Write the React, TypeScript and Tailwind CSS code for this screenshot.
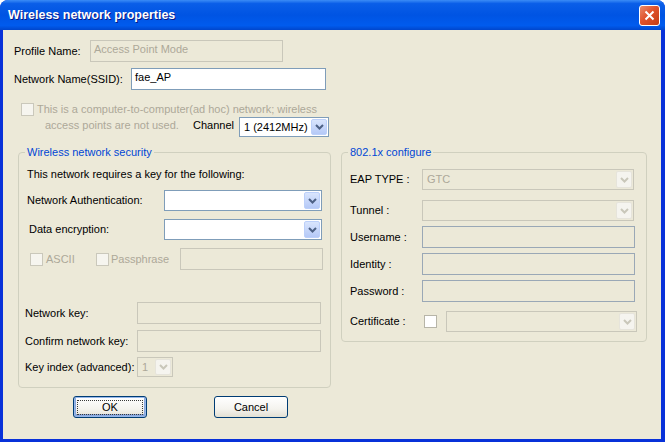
import React from 'react';

function Chevron({ disabled }: { disabled?: boolean }) {
  return (
    <svg width="9" height="6" viewBox="0 0 9 6">
      <path
        d="M1 1l3.5 3.5L8 1"
        stroke={disabled ? '#c9c7ba' : '#4d6185'}
        strokeWidth="2"
        fill="none"
      />
    </svg>
  );
}

function Combo({
  size,
  value,
  disabled = false,
}: {
  size: string;
  value?: string;
  disabled?: boolean;
}) {
  return (
    <div
      className={`${size} flex items-stretch border p-[1px] ${
        disabled ? 'border-[#c9c7ba] bg-[#ece9d8]' : 'border-[#7f9db9] bg-white'
      }`}
    >
      <div
        className={`flex-1 flex items-center pl-[3px] ${
          disabled ? 'text-[#aca899]' : 'text-black'
        }`}
      >
        {value}
      </div>
      <div
        className={`w-[16px] flex items-center justify-center rounded-[2px] border ${
          disabled
            ? 'border-[#e6e4db] bg-[#f5f4ef]'
            : 'border-[#bcd0fa] bg-[linear-gradient(180deg,#d9e5fd,#b5c9f7)]'
        }`}
      >
        <Chevron disabled={disabled} />
      </div>
    </div>
  );
}

function TextBox({
  size,
  value,
  tone = 'enabled',
}: {
  size: string;
  value?: string;
  tone?: 'enabled' | 'disabled' | 'readonly';
}) {
  const cls =
    tone === 'enabled'
      ? 'border-[#7f9db9] bg-white text-black'
      : tone === 'readonly'
        ? 'border-[#9aa8b6] bg-[#ece9d8] text-black'
        : 'border-[#c9c7ba] bg-[#ece9d8] text-[#aca899]';
  return (
    <div className={`${size} border ${cls} pl-[3px] pt-[1px] leading-[14px]`}>
      {value}
    </div>
  );
}

function Check({ disabled = true }: { disabled?: boolean }) {
  return (
    <div
      className={`w-[13px] h-[13px] shrink-0 border ${
        disabled ? 'border-[#cac8bb] bg-[#f6f5ef]' : 'border-[#b7b5a8] bg-white'
      }`}
    />
  );
}

function Group({
  title,
  size,
  children,
}: {
  title: string;
  size: string;
  children: React.ReactNode;
}) {
  return (
    <div className={`${size} relative border border-[#d0d0bf] rounded-[4px]`}>
      <div className="absolute -top-[8px] left-[6px] px-[2px] bg-[#ece9d8] text-[#0046d5] leading-[14px]">
        {title}
      </div>
      {children}
    </div>
  );
}

function XpButton({ label, focused }: { label: string; focused?: boolean }) {
  return (
    <div
      className={`w-[74px] h-[22px] rounded-[3px] border border-[#003c74] bg-[linear-gradient(180deg,#ffffff_0%,#f4f3ee_60%,#e3e0d3_100%)] flex items-center justify-center ${
        focused ? 'shadow-[inset_0_0_0_1px_#98b8ea,inset_0_-1px_0_2px_#8aa8de]' : ''
      }`}
    >
      <div
        className={`flex items-center justify-center w-[66px] h-[15px] ${
          focused ? 'border border-dotted border-[#3a3a3a]' : ''
        }`}
      >
        {label}
      </div>
    </div>
  );
}

export default function App() {
  return (
    <div className="w-[665px] h-[442px] flex flex-col rounded-t-[8px] overflow-hidden bg-[#0831d9] font-['Liberation_Sans',Arial,sans-serif] text-[11px] text-black">
      {/* title bar */}
      <div className="h-[30px] shrink-0 flex items-center justify-between pl-[8px] pr-[5px] bg-[linear-gradient(180deg,#3b8cf6_0%,#0a5ee8_12%,#0054e3_50%,#005bee_85%,#0046cc_100%)]">
        <span className="text-white font-bold text-[12.5px] [text-shadow:1px_1px_#0a1883]">
          Wireless network properties
        </span>
        <div className="w-[21px] h-[21px] rounded-[3px] border border-white bg-[linear-gradient(135deg,#e98b6b_0%,#e0522c_45%,#c33d14_100%)] flex items-center justify-center">
          <svg width="11" height="11" viewBox="0 0 11 11">
            <path d="M1.5 1.5l8 8M9.5 1.5l-8 8" stroke="white" strokeWidth="2" />
          </svg>
        </div>
      </div>

      {/* body */}
      <div className="flex-1 ml-[3px] mr-[4px] mb-[3px] bg-[#ece9d8] pt-[10px] flex flex-col">
        <div className="flex items-center pl-[11px]">
          <span className="w-[76px]">Profile Name:</span>
          <TextBox size="w-[193px] h-[22px]" value="Access Point Mode" tone="disabled" />
        </div>
        <div className="flex items-center pl-[11px] mt-[6px]">
          <span className="w-[117px]">Network Name(SSID):</span>
          <TextBox size="w-[195px] h-[22px]" value="fae_AP" />
        </div>

        <div className="flex pl-[18px] mt-[11px] text-[#aca899]">
          <div className="pt-[2px]">
            <Check />
          </div>
          <div className="ml-[3px] flex flex-col">
            <span className="leading-[16px]">
              This is a computer-to-computer(ad hoc) network; wireless
            </span>
            <div className="flex items-start">
              <span className="ml-[8px] w-[148px] leading-[16px]">access points are not used.</span>
              <span className="w-[46px] leading-[16px] text-black">Channel</span>
              <Combo size="w-[90px] h-[20px]" value="1 (2412MHz)" />
            </div>
          </div>
        </div>

        <div className="flex items-start ml-[15px] mt-[15px] gap-[10px]">
          <Group title="Wireless network security" size="w-[313px] h-[236px]">
            <div className="pl-[8px] pt-[14px] flex flex-col">
              <span className="leading-[14px]">This network requires a key for the following:</span>
              <div className="flex items-center mt-[9px]">
                <span className="w-[137px]">Network Authentication:</span>
                <Combo size="w-[158px] h-[21px]" />
              </div>
              <div className="flex items-center mt-[8px]">
                <span className="w-[137px] pl-[2px]">Data encryption:</span>
                <Combo size="w-[158px] h-[21px]" />
              </div>
              <div className="flex items-center mt-[8px] text-[#aca899]">
                <div className="ml-[3px]">
                  <Check />
                </div>
                <span className="ml-[3px] w-[50px]">ASCII</span>
                <Check />
                <span className="ml-[2px] w-[69px]">Passphrase</span>
                <TextBox size="w-[143px] h-[22px]" tone="disabled" />
              </div>
              <div className="flex items-center mt-[32px] -ml-[2px]">
                <span className="w-[112px]">Network key:</span>
                <TextBox size="w-[184px] h-[22px]" tone="disabled" />
              </div>
              <div className="flex items-center mt-[6px] -ml-[2px]">
                <span className="w-[112px]">Confirm network key:</span>
                <TextBox size="w-[184px] h-[22px]" tone="disabled" />
              </div>
              <div className="flex items-center mt-[5px] -ml-[2px]">
                <span className="w-[112px]">Key index (advanced):</span>
                <Combo size="w-[36px] h-[20px]" value="1" disabled />
              </div>
            </div>
          </Group>

          <Group title="802.1x configure" size="w-[306px] h-[190px]">
            <div className="pl-[8px] pt-[16px] flex flex-col">
              <div className="flex items-center">
                <span className="w-[72px]">EAP TYPE :</span>
                <Combo size="w-[212px] h-[21px]" value="GTC" disabled />
              </div>
              <div className="flex items-center mt-[10px]">
                <span className="w-[72px]">Tunnel :</span>
                <Combo size="w-[212px] h-[21px]" disabled />
              </div>
              <div className="flex items-center mt-[5px]">
                <span className="w-[72px]">Username :</span>
                <TextBox size="w-[213px] h-[22px]" tone="readonly" />
              </div>
              <div className="flex items-center mt-[5px]">
                <span className="w-[72px]">Identity :</span>
                <TextBox size="w-[213px] h-[22px]" tone="readonly" />
              </div>
              <div className="flex items-center mt-[5px]">
                <span className="w-[72px]">Password :</span>
                <TextBox size="w-[213px] h-[22px]" tone="readonly" />
              </div>
              <div className="flex items-center mt-[9px]">
                <span className="w-[74px]">Certificate :</span>
                <Check disabled={false} />
                <div className="ml-[9px]">
                  <Combo size="w-[191px] h-[21px]" disabled />
                </div>
              </div>
            </div>
          </Group>
        </div>

        <div className="flex ml-[70px] mt-[8px] gap-[67px]">
          <XpButton label="OK" focused />
          <XpButton label="Cancel" />
        </div>
      </div>
    </div>
  );
}
